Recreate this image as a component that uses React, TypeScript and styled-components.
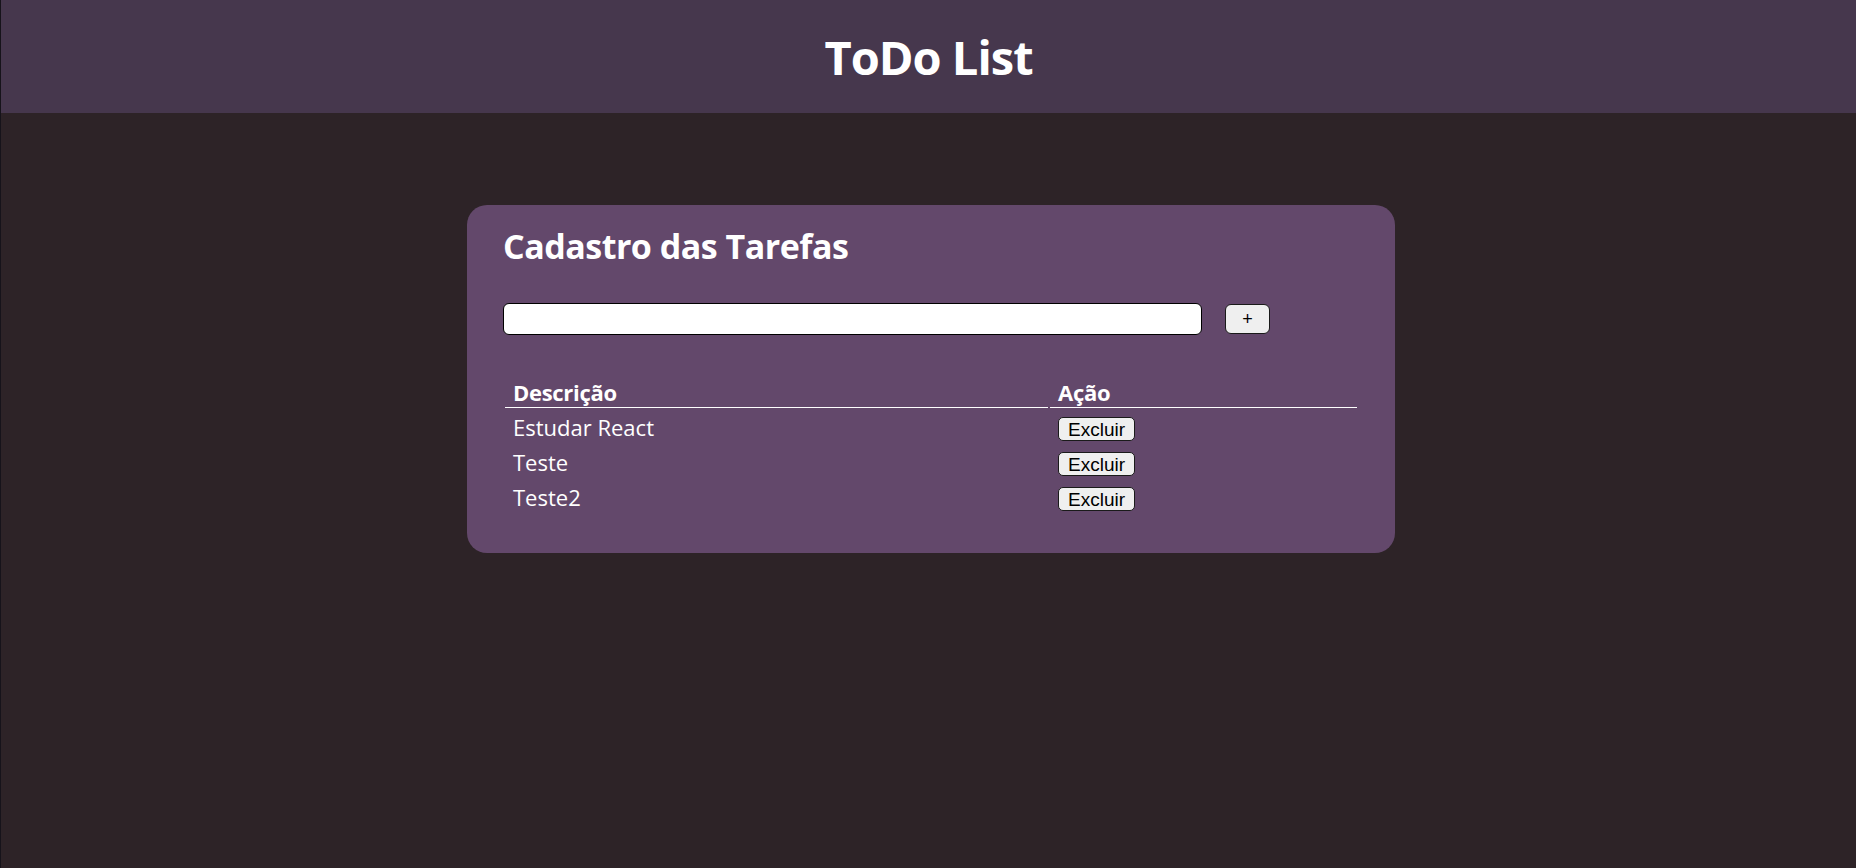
import styled, { createGlobalStyle } from 'styled-components'

const tarefas = ['Estudar React', 'Teste', 'Teste2']

const App = () => {
  return (
    <Page>
      <GlobalStyle />
      <Header>
        <Title>ToDo List</Title>
      </Header>
      <Main>
        <Card>
          <CardTitle>Cadastro das Tarefas</CardTitle>
          <Form>
            <Input type="text" />
            <AddButton>+</AddButton>
          </Form>
          <Table>
            <thead>
              <tr>
                <Th wide>Descrição</Th>
                <Th>Ação</Th>
              </tr>
            </thead>
            <tbody>
              {tarefas.map((t, i) => (
                <tr key={i}>
                  <Td>{t}</Td>
                  <Td>
                    <DeleteButton>Excluir</DeleteButton>
                  </Td>
                </tr>
              ))}
            </tbody>
          </Table>
        </Card>
      </Main>
    </Page>
  )
}

export default App

const GlobalStyle = createGlobalStyle`
  body {
    margin: 0;
    background-color: #2d2327;
    font-family: "Open Sans", "Noto Sans", sans-serif;
  }
`

const Page = styled.div`
  min-height: 100vh;
  border-left: 1px solid #16131a;
`

const Header = styled.header`
  height: 113px;
  background-color: #46374d;
  display: flex;
  align-items: center;
  justify-content: center;
`

const Title = styled.h1`
  margin: 0;
  color: #fff;
  font-size: 47px;
  font-weight: 700;
  letter-spacing: -1px;
`

const Main = styled.main`
  display: flex;
  justify-content: center;
  padding-top: 92px;
  padding-left: 5px;
`

const Card = styled.section`
  width: 928px;
  box-sizing: border-box;
  padding: 18px 36px 38px;
  border-radius: 20px;
  background-color: #63486b;
  color: #fff;
`

const CardTitle = styled.h2`
  margin: 0;
  font-size: 34px;
  font-weight: 700;
  letter-spacing: -0.5px;
`

const Form = styled.div`
  display: flex;
  align-items: center;
  margin-top: 34px;
`

const Input = styled.input`
  width: 699px;
  height: 32px;
  box-sizing: border-box;
  border: 1px solid #000;
  border-radius: 6px;
  background: #fff;
  outline: 0;
`

const AddButton = styled.button`
  margin-left: 23px;
  width: 45px;
  height: 30px;
  box-sizing: border-box;
  background: #efefef;
  border: 1px solid #1a1a1a;
  border-radius: 6px;
  font-family: "Liberation Sans", Arial, sans-serif;
  font-size: 18px;
  color: #000;
`

const Table = styled.table`
  width: 100%;
  margin-top: 42px;
  margin-right: -2px;
  border-spacing: 2px;
`

const Th = styled.th<{ wide?: boolean }>`
  width: ${p => (p.wide ? '527px' : 'auto')};
  text-align: left;
  padding: 0 8px 2px;
  border-bottom: 1px solid #fff;
  font-size: 22px;
  font-weight: 700;
  line-height: 26px;
  letter-spacing: -0.3px;
`

const Td = styled.td`
  height: 33px;
  padding: 0 8px;
  font-size: 22px;
`

const DeleteButton = styled.button`
  height: 24px;
  padding: 0 9px;
  box-sizing: border-box;
  background: #efefef;
  border: 1px solid #1a1a1a;
  border-radius: 5px;
  font-family: "Liberation Sans", Arial, sans-serif;
  font-size: 19px;
  line-height: 21px;
  color: #000;
`
